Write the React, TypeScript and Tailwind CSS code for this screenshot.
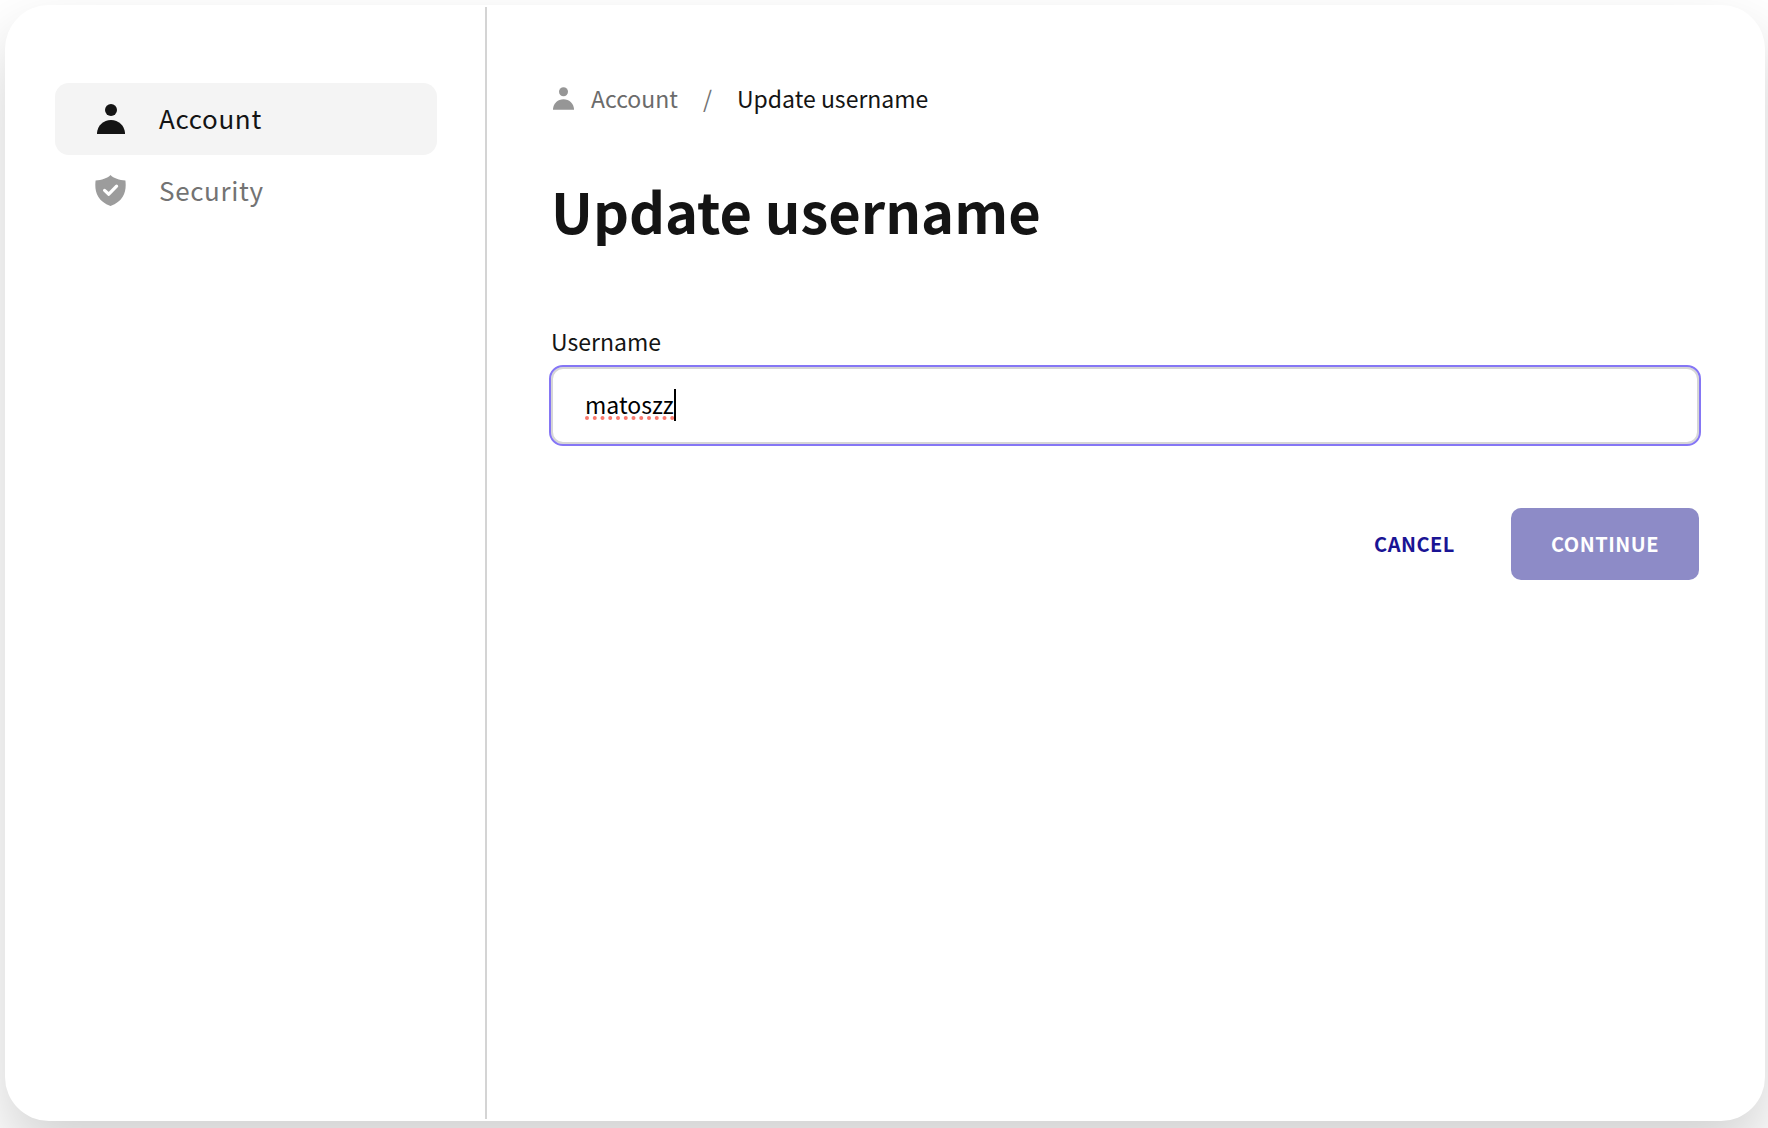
import React from "react";

function PersonIcon({ className }: { className: string }) {
  return (
    <svg viewBox="0 0 28 30" className={className} fill="currentColor" aria-hidden="true">
      <circle cx="14" cy="6" r="6" />
      <path d="M0 30v-1.2C.6 21.6 6.4 16 14 16s13.400 5.600 14 12.800V30z" />
    </svg>
  );
}

function ShieldIcon({ className }: { className: string }) {
  return (
    <svg viewBox="0 0 32 32" className={className} aria-hidden="true">
      <path
        fill="currentColor"
        d="M15.500 0C12.500 3.200 6.500 5.300 .6 5.500C-.6 15.500 1.500 26 15.500 31C29.500 26 31.600 15.500 30.400 5.500C24.500 5.300 18.500 3.200 15.500 0Z"
      />
      <path
        d="M9.600 15.400 13.800 19.200 21.600 11.200"
        fill="none"
        stroke="white"
        strokeWidth="3.200"
        strokeLinecap="round"
        strokeLinejoin="round"
      />
    </svg>
  );
}

const misspellingDots = Array.from({ length: 12 }, (_, i) => 2 + i * 7.75);

export default function App() {
  return (
    <div className="flex min-h-screen overflow-hidden bg-white pt-[5px] pr-[3px] pb-[7px] pl-[5px] font-['Noto_Sans_CJK_JP',sans-serif] text-[#141414]">
      <div className="flex flex-1 rounded-[44px] bg-white shadow-[0_32px_64px_rgba(0,0,0,0.18)]">
        <aside className="my-0.5 w-[482px] shrink-0 border-r-2 border-[#d4d4d4] pt-[76px] pr-12 pl-[50px]">
          <nav className="flex flex-col text-[26px] leading-8 tracking-wide">
            <a href="#account" aria-current="page" className="flex h-[72px] items-center gap-8 rounded-[14px] bg-[#f4f4f4] px-10">
              <span className="flex w-8 justify-center">
                <PersonIcon className="h-[30px] w-7" />
              </span>
              <span className="pb-0.5">Account</span>
            </a>
            <a href="#security" className="flex h-[72px] items-center gap-8 rounded-[14px] px-10 text-[#737373]">
              <ShieldIcon className="size-8 text-[#9c9c9c]" />
              <span className="pb-0.5">Security</span>
            </a>
          </nav>
        </aside>

        <main className="min-w-0 flex-1 pt-[77px] pr-16 pb-16 pl-[62px]">
          <nav aria-label="Breadcrumb" className="flex h-8 items-center pl-1 text-[23px] leading-8">
            <a href="#account" className="flex items-center gap-[17px] text-[#6b6b6b]">
              <PersonIcon className="h-[23px] w-[21px] text-[#969696]" />
              Account
            </a>
            <span className="mx-[25px] text-[#737373]">/</span>
            <span aria-current="page">Update username</span>
          </nav>

          <h1 className="mt-[54px] px-0.5 text-[56px] leading-[84px] font-bold">Update username</h1>

          <form onSubmit={(event) => event.preventDefault()}>
            <label htmlFor="username" className="mt-[73px] block px-0.5 text-[23px] leading-8">
              Username
            </label>
            <div className="relative mt-2 flex">
              <input
                id="username"
                type="text"
                defaultValue="matoszz"
                spellCheck={false}
                className="h-[81px] w-full rounded-[14px] border-2 border-[#8576f5] bg-white px-[34px] pb-1 text-[23px] leading-8 text-black caret-transparent shadow-[inset_0_0_0_2px_#d6d6d6] outline-none"
              />
              <svg className="pointer-events-none absolute top-[51px] left-9 h-1 w-24" fill="#f9786c" aria-hidden="true">
                {misspellingDots.map((x) => (
                  <circle key={x} cx={x} cy="2" r="2" />
                ))}
              </svg>
              <span className="pointer-events-none absolute top-6 left-[125px] h-8 w-0.5 bg-black" />
            </div>
            <div className="mt-[62px] flex justify-end gap-4 pr-0.5 text-[20px] font-bold tracking-wide">
              <button type="button" className="h-[72px] rounded-[10px] px-10 text-[#1a1494]">
                CANCEL
              </button>
              <button type="submit" className="h-[72px] rounded-[10px] bg-[#8d8bc7] px-10 text-white">
                CONTINUE
              </button>
            </div>
          </form>
        </main>
      </div>
    </div>
  );
}
